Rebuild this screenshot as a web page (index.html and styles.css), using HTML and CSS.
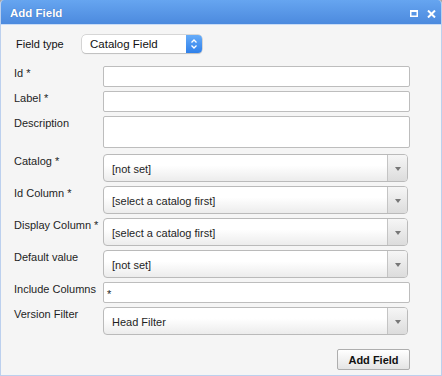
FILE: index.html
```html
<!DOCTYPE html>
<html>
<head>
<meta charset="utf-8">
<link rel="stylesheet" href="styles.css">
</head>
<body>
<div class="window">
  <div class="titlebar">
    <span class="title">Add Field</span>
    <div class="tools">
      <svg class="tool" width="8" height="7" viewBox="0 0 8 7"><rect x="0.75" y="1" width="6.5" height="5.25" fill="none" stroke="#fff" stroke-width="1.5"/><rect x="0" y="0" width="8" height="2" fill="#fff"/></svg>
      <svg class="tool" width="9" height="8" viewBox="0 0 9 8"><path d="M1 0.5 L8 7.5 M8 0.5 L1 7.5" stroke="#fff" stroke-width="2"/></svg>
    </div>
  </div>
  <div class="content">
    <div class="type-row">
      <span class="type-label">Field type</span>
      <div class="mac-select">
        <span class="mac-value">Catalog Field</span>
        <span class="stepper"><svg width="8" height="12" viewBox="0 0 8 12"><path d="M1.5 4.5 L4 2 L6.5 4.5 M1.5 7.5 L4 10 L6.5 7.5" fill="none" stroke="#fff" stroke-width="1.3"/></svg></span>
      </div>
    </div>
    <div class="form">
      <span class="label">Id *</span>
      <div class="input"></div>
      <span class="label">Label *</span>
      <div class="input"></div>
      <span class="label">Description</span>
      <div class="input textarea"></div>
      <span class="label">Catalog *</span>
      <div class="select"><span class="value">[not set]</span><span class="arrow"><span class="tri"></span></span></div>
      <span class="label">Id Column *</span>
      <div class="select"><span class="value">[select a catalog first]</span><span class="arrow"><span class="tri"></span></span></div>
      <span class="label">Display Column *</span>
      <div class="select"><span class="value">[select a catalog first]</span><span class="arrow"><span class="tri"></span></span></div>
      <span class="label">Default value</span>
      <div class="select"><span class="value">[not set]</span><span class="arrow"><span class="tri"></span></span></div>
      <span class="label">Include Columns</span>
      <div class="input"><span class="input-text">*</span></div>
      <span class="label">Version Filter</span>
      <div class="select"><span class="value">Head Filter</span><span class="arrow"><span class="tri"></span></span></div>
    </div>
    <div class="actions">
      <button class="button">Add Field</button>
    </div>
  </div>
</div>
</body>
</html>
```
FILE: styles.css
```css
html, body {
  margin: 0;
  padding: 0;
  background: #a3a3a3;
}
body {
  width: 442px;
  height: 376px;
  overflow: hidden;
  font-family: "Liberation Sans", Arial, sans-serif;
  font-size: 11px;
  color: #1e1e1e;
}
.window {
  width: 442px;
  height: 376px;
  box-sizing: border-box;
  border-radius: 4px 4px 0 0;
  overflow: hidden;
  background: #f5f5f5;
  border: 1px solid #bcd0ee;
  border-top: none;
  display: flex;
  flex-direction: column;
}
.titlebar {
  height: 24px;
  margin: 0 -1px;
  background: linear-gradient(#66a5f0, #4c8ade);
  border-bottom: 1px solid #c9dcf6;
  display: flex;
  align-items: center;
  justify-content: space-between;
  padding: 0 6px 0 10px;
  flex: none;
}
.title {
  color: #fff;
  font-weight: bold;
  font-size: 11.5px;
  text-shadow: 0 0 1px rgba(30, 70, 140, 0.6);
  margin-top: 1px;
}
.tools {
  display: flex;
  align-items: center;
  gap: 9px;
  margin-top: 3px;
}
.tool {
  display: block;
}
.content {
  padding: 10px 0 0 13px;
  flex: 1;
  display: flex;
  flex-direction: column;
}
.type-row {
  display: flex;
  align-items: center;
  height: 18px;
}
.type-label {
  width: 66px;
  padding-left: 2px;
  font-size: 11px;
  color: #111;
}
.mac-select {
  width: 120px;
  height: 18px;
  box-sizing: border-box;
  border-radius: 4px;
  background: #fff;
  box-shadow: 0 0 0 0.5px #b8b8b8, 0 1px 1px rgba(0,0,0,0.18);
  display: flex;
  align-items: center;
  justify-content: space-between;
}
.mac-value {
  padding-left: 8px;
  font-size: 11.5px;
  color: #111;
}
.stepper {
  width: 16px;
  height: 18px;
  border-radius: 0 4px 4px 0;
  background: linear-gradient(#66acf9, #2f80ea);
  display: flex;
  align-items: center;
  justify-content: center;
}
.stepper svg {
  display: block;
}
.form {
  margin-top: 13px;
  display: grid;
  grid-template-columns: 89px 307px;
  row-gap: 4px;
  align-items: start;
}
.label {
  line-height: 13px;
  padding-top: 1px;
  white-space: nowrap;
}
.input {
  height: 21px;
  box-sizing: border-box;
  border: 1px solid #bdbdbd;
  border-radius: 2px;
  background: #fff;
  display: flex;
  align-items: center;
}
.input-text {
  padding-left: 3px;
  padding-top: 3px;
  font-size: 11px;
}
.textarea {
  height: 32px;
  margin-bottom: 2px;
}
.select {
  width: 305px;
  height: 28px;
  box-sizing: border-box;
  border: 1px solid #bababa;
  border-radius: 4px;
  background: linear-gradient(#ffffff 40%, #ececec);
  display: flex;
  align-items: stretch;
}
.value {
  flex: 1;
  display: flex;
  align-items: center;
  padding-left: 8px;
  padding-top: 1px;
  font-size: 11px;
  color: #1e1e1e;
}
.arrow {
  width: 19px;
  border-left: 1px solid #c4c4c4;
  border-radius: 0 3px 3px 0;
  background: linear-gradient(#f6f6f6, #dcdcdc);
  display: flex;
  align-items: center;
  justify-content: center;
}
.tri {
  width: 0;
  height: 0;
  border-left: 3px solid transparent;
  border-right: 3px solid transparent;
  border-top: 4px solid #777;
  margin-top: 1px;
}
.actions {
  margin-top: 14px;
  width: 396px;
  display: flex;
  justify-content: flex-end;
}
.button {
  width: 73px;
  height: 21px;
  box-sizing: border-box;
  border: 1px solid #aeaeae;
  border-radius: 2px;
  background: linear-gradient(#ffffff, #e4e4e4);
  font-family: "Liberation Sans", Arial, sans-serif;
  font-weight: bold;
  font-size: 11px;
  color: #111;
  padding: 0;
}
```
